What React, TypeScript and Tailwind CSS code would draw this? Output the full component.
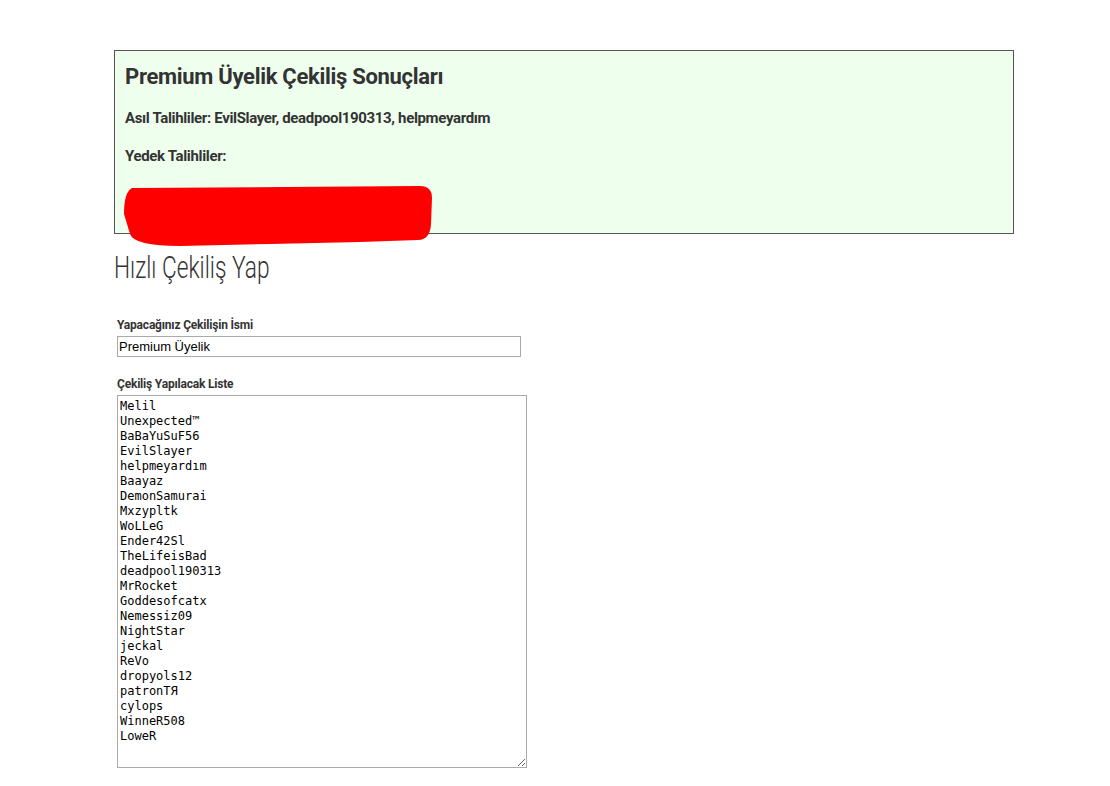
import React from "react";

const names = [
  "Melil","Unexpected™","BaBaYuSuF56","EvilSlayer","helpmeyardım","Baayaz","DemonSamurai","Mxzypltk","WoLLeG","Ender42Sl","TheLifeisBad","deadpool190313","MrRocket","Goddesofcatx","Nemessiz09","NightStar","jeckal","ReVo","dropyols12","patronTЯ","cylops","WinneR508","LoweR",
];

export default function App() {
  return (
    <div className="min-h-[786px] w-[1110px] bg-white text-[#333] font-['Roboto',sans-serif]">
      <div className="pl-[114px] pt-[50px]">
        <div className="relative w-[900px] h-[184px] border border-[#555] bg-[#eeffee] px-[10px]">
          <div className="pt-[12px] text-[22px] font-bold leading-[28px] tracking-[-0.3px]">Premium Üyelik Çekiliş Sonuçları</div>
          <div className="mt-[17px] text-[15px] font-bold leading-[20px] tracking-[-0.35px]">Asıl Talihliler: EvilSlayer, deadpool190313, helpmeyardım</div>
          <div className="mt-[18px] text-[15px] font-bold leading-[20px] tracking-[-0.35px]">Yedek Talihliler:</div>
          <svg className="absolute left-[5px] top-[133px]" width="320" height="64" viewBox="0 0 320 64">
            <path d="M12 4 L300 2 Q312 2 312 14 L311 40 Q310 56 298 56 L240 58 L150 60 L60 62 Q14 62 10 50 L4 30 Q4 8 12 4 Z" fill="#ff0000" />
          </svg>
        </div>
        <div className="mt-[15px] text-[32px] font-light leading-[36px] origin-left scale-x-[0.71]">Hızlı Çekiliş Yap</div>
        <div className="pl-[3px] mt-[32px] flex flex-col">
          <label className="text-[12px] font-bold leading-[16px] tracking-[-0.2px]">Yapacağınız Çekilişin İsmi</label>
          <input
            className="block mt-[3px] w-[404px] h-[21px] border border-[#aaa] px-[1px] text-[13px] text-black outline-none font-['Liberation_Sans',Arial,sans-serif]"
            defaultValue="Premium Üyelik"
          />
          <label className="mt-[19px] text-[12px] font-bold leading-[16px] tracking-[-0.2px]">Çekiliş Yapılacak Liste</label>
          <textarea
            className="block mt-[3px] w-[410px] h-[373px] border border-[#aaa] px-[2px] pt-[3px] pb-[2px] text-[12px] leading-[15px] text-black outline-none resize font-['DejaVu_Sans_Mono',monospace]"
            defaultValue={names.join("\n")}
          />
        </div>
      </div>
    </div>
  );
}
